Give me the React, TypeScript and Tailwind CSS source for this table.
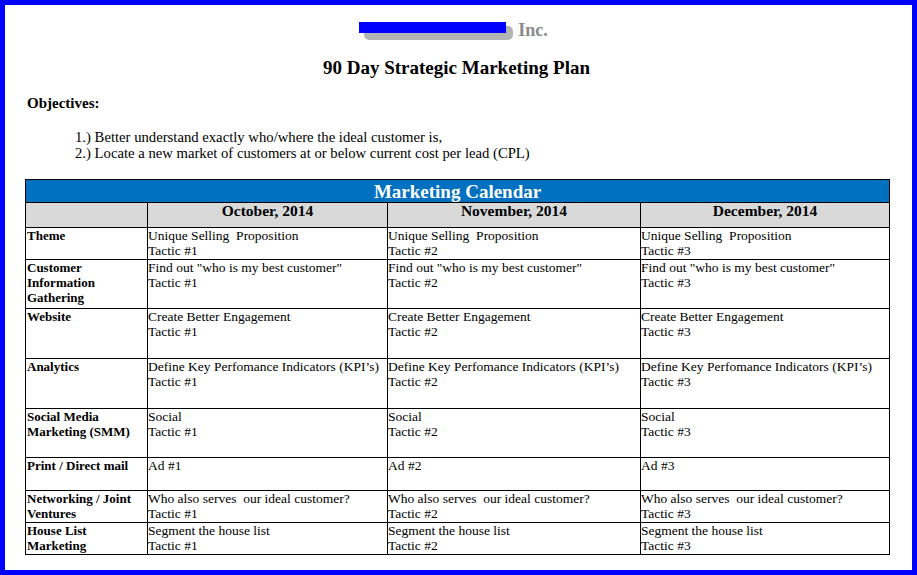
const serif = { fontFamily: '"Liberation Serif", "Times New Roman", serif' };

type Row = {
  label: string[];
  text: string;
  tactic: string;
  h: string;
};

const rows: Row[] = [
  { label: ["Theme"], text: "Unique Selling\u00a0 Proposition", tactic: "Tactic", h: "h-[32px]" },
  { label: ["Customer", "Information", "Gathering"], text: 'Find out "who is my best customer"', tactic: "Tactic", h: "h-[49px]" },
  { label: ["Website"], text: "Create Better Engagement", tactic: "Tactic", h: "h-[50px]" },
  { label: ["Analytics"], text: "Define Key Perfomance Indicators (KPI\u2019s)", tactic: "Tactic", h: "h-[50px]" },
  { label: ["Social Media", "Marketing (SMM)"], text: "Social", tactic: "Tactic", h: "h-[49px]" },
  { label: ["Print / Direct mail"], text: "", tactic: "Ad", h: "h-[33px]" },
  { label: ["Networking / Joint", "Ventures"], text: "Who also serves\u00a0 our ideal customer?", tactic: "Tactic", h: "h-[32px]" },
  { label: ["House List", "Marketing"], text: "Segment the house list", tactic: "Tactic", h: "h-[32px]" },
];

const months = ["October, 2014", "November, 2014", "December, 2014"];

export default function App() {
  return (
    <div
      className="w-[917px] h-[575px] border-[5px] border-[#0000ff] bg-white box-border text-black overflow-hidden"
      style={serif}
    >
      {/* 회사 로고 (가려진 부분) */}
      <div className="flex justify-center items-center pt-[15px] h-[38px] pr-[10px]">
        <div className="relative w-[154px] h-[20px]">
          <div className="absolute left-[5px] top-[4px] w-[149px] h-[14px] rounded-[5px] bg-[#b4b4b4]" />
          <div className="absolute left-0 top-0 w-[147px] h-[11px] bg-[#0000ff]" />
        </div>
        <span className="text-[18px] font-bold text-[#8a8a8a] ml-[5px] -mt-[2px]">Inc.</span>
      </div>

      {/* 제목 */}
      <h1 className="text-center text-[19px] font-bold leading-[24px] mt-[13px] pr-[4px]">
        90 Day Strategic Marketing Plan
      </h1>

      {/* 목표 */}
      <div className="mt-[15px] pl-[22px] text-[15px] font-bold leading-[16px]">Objectives:</div>
      <ol className="mt-[18px] pl-[70px] text-[14.7px] leading-[16px]">
        <li>1.) Better understand exactly who/where the ideal customer is,</li>
        <li>2.) Locate a new market of customers at or below current cost per lead (CPL)</li>
      </ol>

      {/* 마케팅 캘린더 */}
      <table className="mt-[18px] ml-[20px] table-fixed border-collapse w-[864px]">
        <colgroup>
          <col className="w-[122px]" />
          <col className="w-[240px]" />
          <col className="w-[253px]" />
          <col className="w-[249px]" />
        </colgroup>
        <thead>
          <tr className="h-[23px]">
            <th
              colSpan={4}
              className="bg-[#0070c0] text-white text-[19px] font-bold border border-black p-0 leading-[19px]"
            >
              Marketing Calendar
            </th>
          </tr>
          <tr className="h-[25px]">
            <th className="bg-[#d9d9d9] border border-black p-0" />
            {months.map((m) => (
              <th
                key={m}
                className="bg-[#d9d9d9] border border-black p-0 align-top text-[15.5px] font-bold leading-[16px]"
              >
                {m}
              </th>
            ))}
          </tr>
        </thead>
        <tbody className="text-[13px] leading-[15px]">
          {rows.map((r) => (
            <tr key={r.label.join(" ")} className={r.h}>
              <td className="border border-black align-top pl-[1px] pt-0 font-bold whitespace-nowrap">
                {r.label.map((l) => (
                  <div key={l}>{l}</div>
                ))}
              </td>
              {[1, 2, 3].map((n) => (
                <td key={n} className="border border-black align-top pt-0 pl-0 whitespace-nowrap text-[13.5px]">
                  {r.text && <div>{r.text}</div>}
                  <div>
                    {r.tactic} #{n}
                  </div>
                </td>
              ))}
            </tr>
          ))}
        </tbody>
      </table>
    </div>
  );
}
